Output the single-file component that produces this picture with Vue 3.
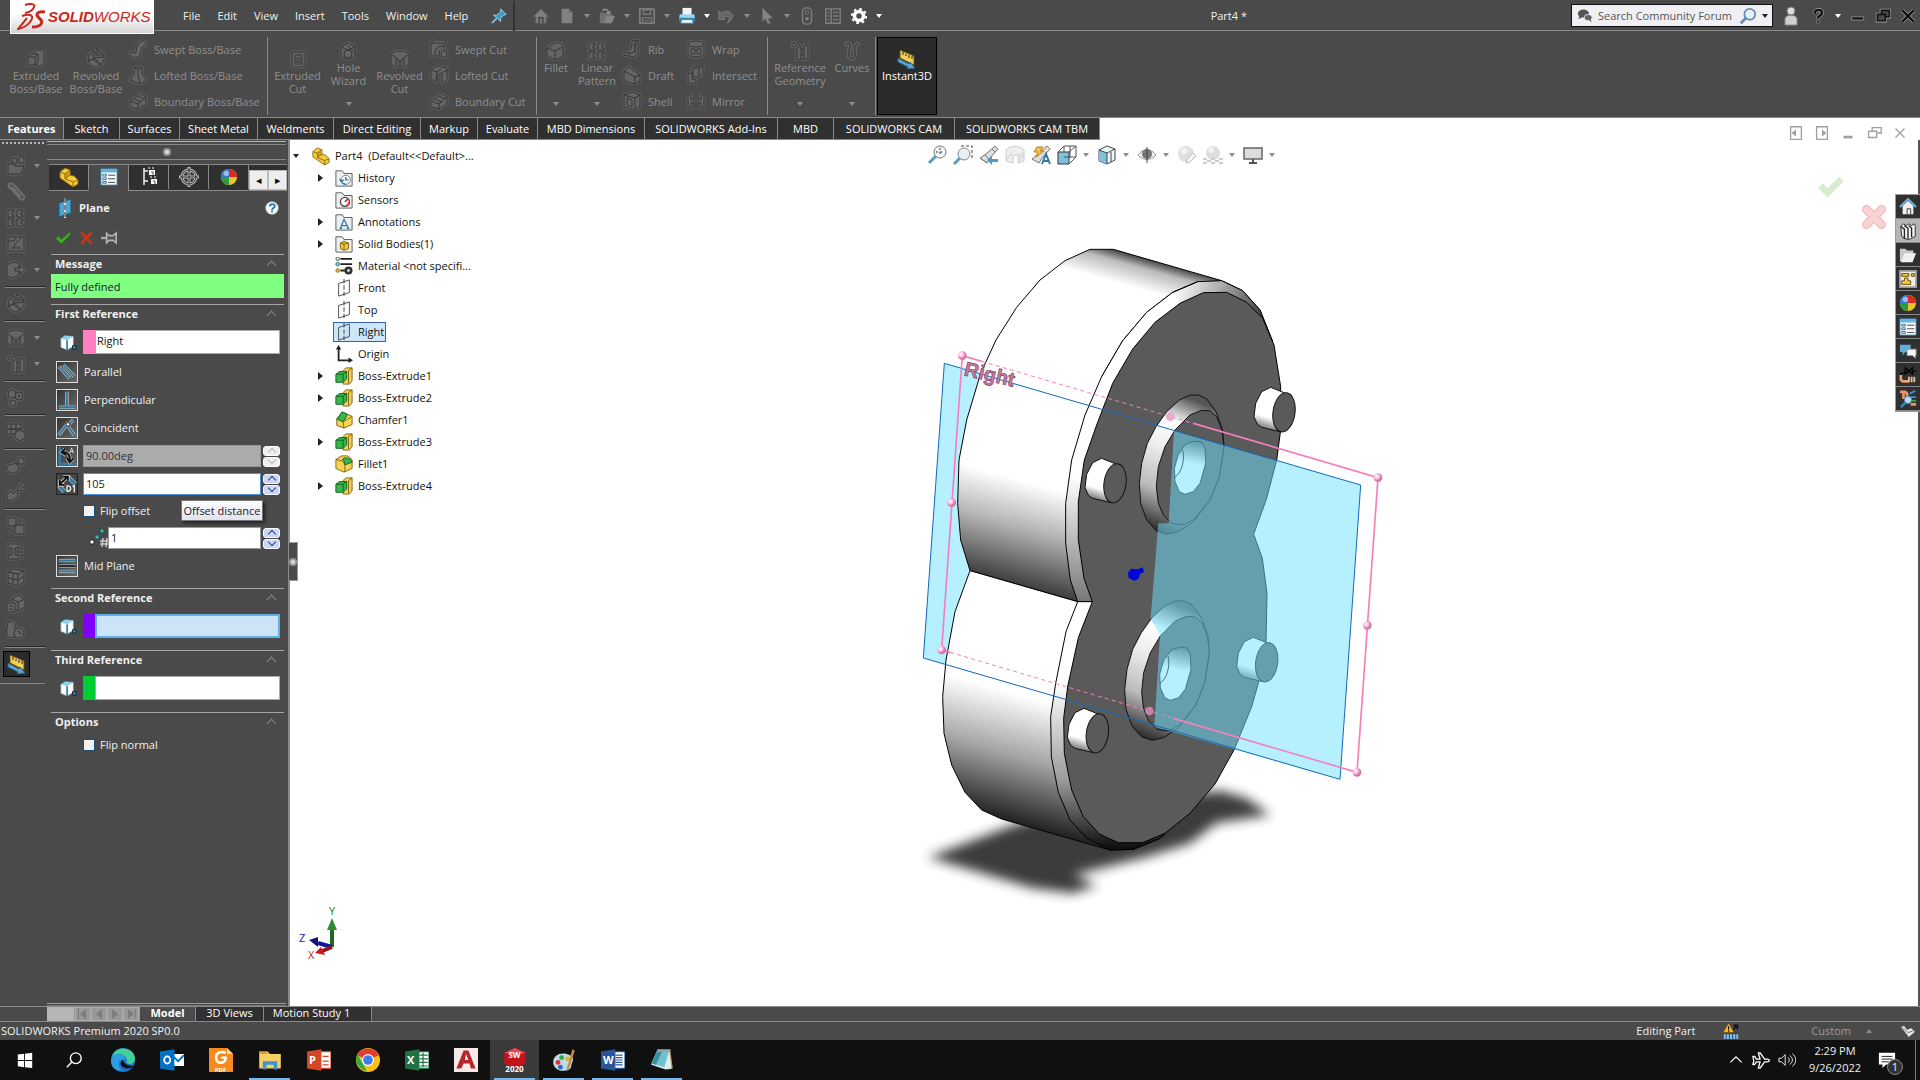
<script setup>
import { h, ref } from 'vue'

/* Disabled command glyphs share one dark-on-grey palette */
const dim = (body) => `<g fill="#646464" stroke="#353535" stroke-width="1" stroke-linejoin="round">${body}</g>`
const halo = (body) => `<g fill="none" stroke="#606060" stroke-width="3" stroke-linejoin="round">${body}</g>` + dim(body)

const icons = {
  extrude: halo('<path d="M8 3l3-2h7v13l-3 3h-4z"/><path d="M2 8l3-3h7v8l-3 3H2z"/><path d="M2 8h7v8M9 8l3-3" />'),
  revolve: halo('<path d="M10 1a8 8 0 1 1-6 3l5 5 8-1C17 4 14 1 10 1z"/><path d="M3 12l5-3 7 6-4 3c-4 0-7-2-8-6z"/><path d="M2 13l5-3 8 7"/>'),
  sweep: halo('<path d="M11 5c0-3 6-5 7-1 1 3-3 3-4 4-2 2 0 9-5 10-5 2-8-3-6-5 2-1 2 2 4 1 3-2 0-7 4-9z"/>'),
  loft: halo('<path d="M6 3l4-2 4 2v6l4 6-6 4-10-4 4-6z"/><path d="M6 3l4 1 4-1M10 4v5l2 10"/>'),
  boundary: halo('<path d="M2 10l5-4c2 2 4-4 6-3l5 3v7l-8 5-8-2z"/><path d="M2 10l8 3 8-7M10 13v5M6 8l7 3M10 5l6 3"/>'),
  cut: halo('<path d="M4 3h13v13l-3 2H4z"/><path d="M7 6h7v9H7z"/><path d="M9 9h3v4H9z"/>'),
  hole: halo('<path d="M2 6l7-4 7 4v9l-7 4-7-4z"/><path d="M2 6l7 3 7-3"/><circle cx="9" cy="13" r="4"/><path d="M8 4l9 9 M14 1l1 3M18 6l-3-1"/>'),
  revcut: halo('<path d="M1 5c4-4 14-4 18 0v10l-5 3V9l-4 3-4-3v9l-5-3z"/><path d="M1 5l5 4M19 5l-5 4M10 12v5"/>'),
  sweepcut: halo('<path d="M2 3l4-2h12l-3 4v3c-4 0-5 4-5 9H2z"/><path d="M6 16c0-7 3-9 9-9M2 4h13"/><path d="M12 18c0-4 1-6 5-7l1 7z"/>'),
  loftcut: halo('<path d="M2 5l6-4 10 2v12l-5 3V8l-3 1-3 8-5-3z"/><path d="M2 5l6 2 4-3M8 7l-1 10M13 8l5-3"/>'),
  fillet: halo('<path d="M1 7l8-5c5-1 8 1 8 5v8l-8 4-8-4z"/><path d="M1 7l8 3 8-4M9 10v9"/>'),
  pattern: halo('<path d="M2 2h6v2H6v3h2v2H2zM11 2h6v2h-2v3h2v2h-6zM2 11h6v2H6v3h2v2H2zM11 11h6v2h-2v3h2v2h-6z"/>'),
  rib: halo('<path d="M10 2l6-1v13l-4 4-10-2v-3l4 1c3-2 4-6 4-12z"/><path d="M16 1l-3 3v9l-7 2M13 4v9"/>'),
  draft: halo('<path d="M2 6l5-4 11 8v6l-5 3-11-3z"/><path d="M2 6l11 6v7M13 12l5-2"/>'),
  shell: halo('<path d="M2 4l8-3 8 3v11l-5 4-11-3z"/><path d="M2 4l11 3v12M13 7l5-3M5 7l5 2v7l-5-2z"/>'),
  wrap: halo('<path d="M2 5v10c0 4 16 4 16 0V5c0-4-16-4-16 0z"/><path d="M2 5c0 4 16 4 16 0"/><path d="M5 10h4v5H5zM11 10h4v5h-4z"/>'),
  intersect: halo('<path d="M7 3l3-2h7v8l-4 3H7z"/><path d="M2 8h4v6l4 1v3l-5 1-3-3z"/><path d="M7 3h6v8M13 3l4-2"/>'),
  mirror: halo('<path d="M2 3h3v5h3V3M8 17v-5H5v5H2V3M18 3h-3v5h-3V3M12 17v-5h3v5h3V3"/><path d="M10 1v18"/>'),
  refgeo: halo('<circle cx="4" cy="4" r="2"/><path d="M7 7l4-2v13l-4 1zM14 5l4-1v13l-4 2z"/><path d="M12 2v17" stroke-dasharray="3 2"/>'),
  curves: '<g fill="none" stroke-linecap="round"><path d="M4 3c6-2 4 3 3 7-3 11 8 9 6 1-1-4-1-7 3-8" stroke="#6a6a6a" stroke-width="4"/><path d="M4 3c6-2 4 3 3 7-3 11 8 9 6 1-1-4-1-7 3-8" stroke="#454545" stroke-width="2"/></g>',
  instant: '<path d="M3 1l14 6v9L3 9z" fill="#f4cf58" stroke="#6b5212"/><path d="M6 3v3M9 5v2M12 6v3M15 7v3" stroke="#222"/><path d="M1 9l11 6 1-2 5 6-8 1 1-2L1 13z" fill="#5fa4cc" stroke="#27668c"/>',
  clip: '<g fill="none" stroke="#6e6e6e" stroke-width="2"><path d="M3 4l11 13c3 2 5-1 4-3L8 3C5 0 1 2 3 5z M6 5l9 10"/></g>',
  sketchbox: halo('<path d="M2 3h16v14H2z"/><path d="M2 7h6l2-4M8 14l1-4 7-7M5 14h10"/>'),
  convert: halo('<path d="M1 5l5-3 7 1v12l-6 3-6-2z"/><path d="M9 8h5V5l5 5-5 4v-3H9z"/>'),
  gears: halo('<circle cx="6" cy="6" r="4"/><circle cx="13" cy="8" r="4"/><circle cx="7" cy="15" r="3"/><circle cx="13" cy="8" r="1"/>'),
  sheet: halo('<path d="M1 2h14v5H1zM1 7h14v5H1zM5 2v10M10 2v10"/><path d="M9 11l5-3 5 3v5l-5 3-5-3z"/>'),
  assem: halo('<path d="M1 11c3-5 5 0 7-4l4 2c2 5-3 9-7 8-3-1-5-3-4-6z"/><path d="M12 2h6v6h-6zM9 8l3-2"/>'),
  assem2: halo('<path d="M1 13l4-4 2 3 4-4 1 5-5 5-5 1z"/><path d="M12 7l2-5 4 4 1-4M11 9l6-1"/>'),
  joint: halo('<path d="M2 2h8v8H2zM9 9h9v9H9z"/><path d="M14 2v3M18 4l-3 2M4 13l3 2M2 16h4"/>'),
  beam: halo('<path d="M2 2h11v4H9v7h4v4H2v-4h4V6H2z"/><path d="M16 2v6l-2-2M16 18v-6l2 2M14 10h5"/>'),
  blocks: halo('<path d="M2 4l6-3 10 2v11l-6 4-10-3z"/><path d="M2 4l10 2v12M12 6l6-3M7 5v11M2 10l10 2 6-4"/>'),
  doccube: halo('<path d="M6 5l6-4 7 4v8l-7 4-6-4z"/><path d="M1 9h8v9H1zM3 12h4M3 15h4M12 8v9M6 5l6 3 7-3"/>'),
  clock: halo('<path d="M2 2c5-2 8 1 7 5v10c-8 2-9-2-8-8z"/><circle cx="13" cy="13" r="5"/><path d="M13 10v3l3 1"/>'),
  openasm: halo('<path d="M2 8h5l2 2h9l-3 8H2z"/><path d="M6 2h5v5H6zM13 1h5v6h-5z"/>'),
  home: '<path d="M2 10l8-8 8 8v1h-2v7H4v-7H2z" fill="#7d7d7d" stroke="#5a5a5a"/><path d="M7 18v-7h6v7z" fill="#4a4a4a"/><path d="M9 18v-5h2v5z" fill="#7d7d7d"/>',
  newdoc: '<path d="M4 2h8l4 4v12H4z" fill="#818181"/><path d="M12 2v4h4" fill="#666"/>',
  open: '<path d="M2 6h5l2 2h3l5 1-3 9H2z" fill="#717171"/><path d="M6 18l3-8h10l-4 8z" fill="#858585"/><path d="M5 4c4-3 7 0 7 3M14 5l-2 3-3-2" fill="none" stroke="#8a8a8a" stroke-width="2"/>',
  save: '<path d="M2 2h15l1 1v15H2z" fill="none" stroke="#7b7b7b" stroke-width="2"/><path d="M6 3h8v5H6zM5 12h10v6H5z" fill="none" stroke="#7b7b7b" stroke-width="1.500"/><path d="M7 15h6" stroke="#7b7b7b"/>',
  print: '<path d="M5 1h10v8H5z" fill="#f4f4f4"/><path d="M2 8h16l1 5H1z" fill="#9fd4ef"/><path d="M1 12h18v4H1z" fill="#2e86b5"/><path d="M4 14h12l1 4H3z" fill="#fff" stroke="#2e86b5"/>',
  undo: '<path d="M4 7c5-5 13-1 12 4-1 4-4 6-6 7 4-5 3-9-4-7l2 3H1V4z" fill="#666" stroke="#7e7e7e"/>',
  cursor: '<path d="M5 1l11 11-5 1 3 5-3 1-3-6-3 3z" fill="#858585" stroke="#666"/>',
  rebuild: '<rect x="5" y="1" width="10" height="18" rx="4" fill="#4b4b4b" stroke="#7f7f7f" stroke-width="1.500"/><circle cx="10" cy="6" r="2" fill="none" stroke="#7f7f7f"/><circle cx="10" cy="13" r="2" fill="#7f7f7f"/>',
  list: '<g fill="none" stroke="#808080" stroke-width="1.500"><path d="M2 2h16v16H2zM8 2v16M4 6h2M4 10h2M4 14h2M10 6h6M10 10h6M10 14h6"/></g>',
  gear: '<circle cx="10" cy="10" r="5" fill="none" stroke="#fff" stroke-width="4"/><circle cx="10" cy="10" r="8" fill="none" stroke="#fff" stroke-width="2" stroke-dasharray="3 3.280"/>',
  pushpin: '<path d="M12 1l7 7-3 1-4 4v4l-4-4-6 6-1-1 6-6-4-3h4l5-4z" fill="#3f9bc4" stroke="#a9d9ec"/>',
  chat: '<ellipse cx="8" cy="7" rx="7" ry="5" fill="#555"/><path d="M3 10l-1 4 5-3z" fill="#555"/><ellipse cx="14" cy="12" rx="5" ry="4" fill="#666" stroke="#fff"/><path d="M15 15l3 3-1-5z" fill="#666"/>',
  magnify: '<circle cx="12" cy="8" r="6" fill="#e6f1fb" stroke="#6b8fb4" stroke-width="2"/><path d="M8 12l-6 6" stroke="#5d8cb8" stroke-width="3"/>',
  person: '<path d="M4 19v-6c0-5 12-5 12 0v6z" fill="#cfcfcf" stroke="#888"/><circle cx="10" cy="5" r="4" fill="#dcdcdc" stroke="#777"/>',
  ques: '<path d="M6 7c0-6 9-6 9-1 0 4-5 3-5 7" fill="none" stroke="#999" stroke-width="5"/><circle cx="10" cy="17" r="2" fill="#111" stroke="#999"/><path d="M6 7c0-6 9-6 9-1 0 4-5 3-5 7" fill="none" stroke="#111" stroke-width="3"/>',
  wmin: '<path d="M2 11h15v4H2z" fill="#161616" stroke="#999"/>',
  wres: '<path d="M8 3h10v8H8zM3 8h10v8H3z" fill="#4a4a4a" stroke="#999" stroke-width="4"/><path d="M8 3h10v8H8z" fill="#4a4a4a" stroke="#111" stroke-width="2"/><path d="M3 8h10v8H3z" fill="#4a4a4a" stroke="#111" stroke-width="2"/>',
  wclose: '<path d="M3 3l14 14M17 3L3 17" stroke="#999" stroke-width="5"/><path d="M3 3l14 14M17 3L3 17" stroke="#111" stroke-width="3"/>',
  dleft: '<path d="M4 3h12v14H4z" fill="none" stroke="#a0a0a0" stroke-width="1.500"/><path d="M10 6v8l-5-4z" fill="#a0a0a0"/>',
  dright: '<path d="M4 3h12v14H4z" fill="none" stroke="#a0a0a0" stroke-width="1.500"/><path d="M10 6v8l5-4z" fill="#a0a0a0"/>',
  dmin: '<path d="M5 13h10v3H5z" fill="#a0a0a0"/>',
  dres: '<path d="M8 8V4h10v6h-4M4 8h9v7H4z" fill="none" stroke="#a0a0a0" stroke-width="1.500"/>',
  dclose: '<path d="M5 5l10 10M15 5L5 15" stroke="#a0a0a0" stroke-width="1.500"/>',
  okbig: '<path d="M2 13l4-4 4 4L20 3l4 4-14 14z" fill="#d7ecd0"/>',
  nobig: '<path d="M5 5l14 14M19 5L5 19" stroke="#f2b5b5" stroke-width="8" stroke-linecap="round"/><path d="M5 5l14 14M19 5L5 19" stroke="#f8d3d3" stroke-width="6" stroke-linecap="round"/>',
  part: '<path d="M1 5l5-4 5 2v5l4 1 4 4v4l-5 3L1 11z" fill="#f5cb3c" stroke="#8a6a10"/><path d="M6 7l5-4 0 5-5 4z" fill="#d39a1c"/><path d="M1 5l5 2 5-4M6 7v5M6 12l8 3 5-2M14 15v5M6 12l5-4" fill="none" stroke="#8a6a10"/>',
  propman: '<path d="M1 1h18v18H1z" fill="#fff" stroke="#2d77a0"/><path d="M1 1h18v4H1z" fill="#68b3dc"/><path d="M3 7h4v2H3zM3 11h4v2H3zM3 15h4v2H3z" fill="none" stroke="#1f6a96"/><path d="M9 8h8M9 12h8M9 16h8" stroke="#333"/>',
  config: '<path d="M5 1v17M5 4h4M5 14h4" stroke="#eee" stroke-width="1.500" fill="none"/><path d="M10 3h6v5h-6zM12 12h6v5h-6z" fill="#fff"/><path d="M9 1h2M13 1h2M11 10h2M15 10h2" stroke="#fff"/><path d="M12 5h2v3M14 14h2v3" stroke="#555" fill="none"/>',
  target: '<circle cx="10" cy="10" r="7" fill="none" stroke="#bbb" stroke-width="3"/><path d="M10 0v20M0 10h20" stroke="#bbb" stroke-width="3"/><circle cx="10" cy="10" r="7" fill="none" stroke="#333"/><path d="M10 1v18M1 10h18" stroke="#333"/>',
  ball: '<circle cx="10" cy="10" r="9" fill="#e9c52d"/><path d="M10 10V1a9 9 0 0 0-9 9z" fill="#3575e0"/><path d="M10 10h9a9 9 0 0 0-9-9z" fill="#d92b20"/><path d="M10 10H1a9 9 0 0 0 9 9z" fill="#2a9c3b"/><circle cx="7" cy="6" r="3" fill="#fff" opacity=".5"/>',
  planei: '<path d="M4 5l12-4v14L4 19z" fill="#4fa3d1" stroke="#1f5876"/><path d="M10 0v20" stroke="#ddd" stroke-width="2"/><path d="M10 0v20" stroke="#222" stroke-dasharray="5 2"/>',
  ok: '<path d="M1 11l3-3 4 4 10-9 2 2L8 17z" fill="#3fae29" stroke="#2c7d1b"/>',
  no: '<path d="M4 3l13 14M17 3L4 17" stroke="#d6340f" stroke-width="3"/>',
  pinh: '<path d="M0 10h7" stroke="#aaa" stroke-width="3"/><path d="M7 4l3 3h5l4-3v12l-4-3h-5l-3 3z" fill="#555" stroke="#b5b5b5" stroke-width="2"/>',
  help: '<circle cx="10" cy="10" r="9" fill="#f6fbfe" stroke="#bbb"/><path d="M7 8c0-5 7-4 7-1 0 3-4 3-4 6" fill="none" stroke="#1d7cab" stroke-width="2.500"/><circle cx="10" cy="15" r="1.500" fill="#1d7cab"/>',
  face: '<path d="M2 6l5-3 9 1v11l-7 4-7-3z" fill="#fff" stroke="#888"/><path d="M2 6l5-3 9 1-7 4z" fill="#8fd0ee"/><path d="M9 8v11" stroke="#2d88b8" stroke-width="2"/><path d="M15 14h4v4h-4z" fill="#2d88b8" stroke="#123"/>',
  parallel: '<path d="M2 5l12 13M7 3l12 13" stroke="#aaa" stroke-width="4"/><path d="M2 5l12 13M7 3l12 13" stroke="#2f7ba6" stroke-width="2"/>',
  perp: '<path d="M11 2v16M2 19h18" stroke="#aaa" stroke-width="4"/><path d="M11 2v16M2 19h18" stroke="#2f7ba6" stroke-width="2"/>',
  coin: '<path d="M2 19l9-12 8 12M12 8l6-6" fill="none" stroke="#aaa" stroke-width="4"/><path d="M2 19l9-12 8 12M12 8l6-6" fill="none" stroke="#2f7ba6" stroke-width="2"/><circle cx="12" cy="7" r="2" fill="#fff" stroke="#222"/>',
  angle: '<path d="M3 1v19h17" fill="none" stroke="#2f7ba6" stroke-width="3"/><path d="M6 7c5-1 9 3 8 9M9 3L5 7l5 3M11 13l3 5 4-4" fill="none" stroke="#aaa" stroke-width="4"/><path d="M6 7c5-1 9 3 8 9M9 3L5 7l5 3M11 13l3 5 4-4" fill="none" stroke="#111" stroke-width="2"/><path d="M14 8l2-6 2 6M15 6h3" fill="none" stroke="#ddd"/>',
  dist: '<path d="M2 13l6 6M12 3l8 8" stroke="#aaa" stroke-width="5"/><path d="M2 13l6 6M12 3l8 8" stroke="#2f7ba6" stroke-width="3"/><path d="M3 11l9-8M3 6v6h5M7 3h5v4" stroke="#ccc" stroke-width="4" fill="none"/><path d="M3 11l9-8M3 6v6h5M7 3h5v4" stroke="#111" stroke-width="2" fill="none"/><path d="M11 13h1c4 0 4 6 0 6h-1zM17 14l2-1v7" fill="none" stroke="#eee" stroke-width="1.500"/>',
  mid: '<path d="M2 5h18M2 11h18M2 17h18" stroke="#aaa" stroke-width="4"/><path d="M2 5h18M2 17h18" stroke="#2f7ba6" stroke-width="2"/><path d="M2 11h18" stroke="#222" stroke-width="2"/>',
  count: '<path d="M0 12h4v4H0z" fill="#fff" stroke="#222"/><path d="M5 7h4v4H5zM10 1h4v4h-4z" fill="#54a9d4" stroke="#153"/><path d="M13 10l-1 9M17 10l-1 9M10 13h9M10 16h9" stroke="#ccc" stroke-width="1.500"/>',
  fhist: '<path d="M1 2h7l2 3h9v14H1z" fill="#eee" stroke="#555"/><circle cx="12" cy="12" r="5" fill="#fff" stroke="#777"/><path d="M7 12a5 5 0 0 0 5 5M12 9v3h3M5 11l2 3 3-2" stroke="#1d7cab" fill="none" stroke-width="1.500"/>',
  fsens: '<path d="M1 2h7l2 3h9v14H1z" fill="#eee" stroke="#555"/><circle cx="11" cy="12" r="5" fill="#fff" stroke="#444" stroke-width="1.500"/><path d="M11 12l3-3" stroke="#c33" stroke-width="2"/><path d="M13 16a5 5 0 0 0 3-4" stroke="#e33" stroke-width="2" fill="none"/>',
  fann: '<path d="M1 2h7l2 3h9v14H1z" fill="#eee" stroke="#555"/><path d="M6 17l4-10 5 10M8 14h5M5 17h3M13 17h3" stroke="#2d83b3" stroke-width="1.500" fill="none"/>',
  fbody: '<path d="M1 2h7l2 3h9v14H1z" fill="#eee" stroke="#555"/><path d="M6 9l4-2 5 2v6l-5 2-4-2z" fill="#f3c83b" stroke="#795b0b"/><path d="M6 9l4 1 5-1M10 10v6" stroke="#795b0b" fill="none"/>',
  mat: '<path d="M6 2h13M6 8h13M6 15h6" stroke="#222" stroke-width="2"/><circle cx="3" cy="2" r="2" fill="#ddd" stroke="#555"/><circle cx="3" cy="8" r="2" fill="#7ec4e8" stroke="#276"/><circle cx="3" cy="15" r="2" fill="#f0c32e" stroke="#861"/><circle cx="15" cy="15" r="3" fill="none" stroke="#333" stroke-width="3"/>',
  tplane: '<path d="M4 5l12-4v14L4 19z" fill="none" stroke="#444"/><path d="M10 0v20" stroke="#333" stroke-dasharray="5 2"/>',
  origin: '<path d="M4 3v14h14" fill="none" stroke="#222" stroke-width="2"/><path d="M1 5l3-5 3 5zM15 14l5 3-5 3z" fill="#222"/>',
  bossx: '<path d="M9 4l3-3h7v14l-3 4H9z" fill="#f3cf55" stroke="#7a5d12"/><path d="M15 4l4-3M15 4v14" stroke="#7a5d12"/><path d="M1 8l4-3h8v8l-4 4H1z" fill="#35b84b" stroke="#0f5a1d"/><path d="M1 8h8v8M9 8l4-3" fill="none" stroke="#0f5a1d"/>',
  chamf: '<path d="M2 9l6-8 11 5v9l-9 4-8-3z" fill="#f5d451" stroke="#7a5d12"/><path d="M2 9l6-8 6 3-5 8z" fill="#35b84b" stroke="#0f5a1d"/><path d="M9 12l1 7M9 12l10-6" stroke="#7a5d12" fill="none"/>',
  fill: '<path d="M1 5l6-4 7 0 5 4v10l-9 4-9-4z" fill="#f5d451" stroke="#7a5d12"/><path d="M8 5c2-3 10-2 11 3l-8 3c0-3-1-5-3-6z" fill="#35b84b" stroke="#0f5a1d"/><path d="M1 5l8 2 2 4v8" fill="none" stroke="#7a5d12"/>',
  zfit: '<circle cx="13" cy="7" r="6" fill="#f2f6f8" stroke="#777"/><path d="M13 3v8M9 7h8" stroke="#333" stroke-dasharray="2 2"/><path d="M9 11l-7 7" stroke="#5b9fc0" stroke-width="3"/>',
  zarea: '<path d="M8 1h11v13" fill="none" stroke="#444" stroke-dasharray="3 2"/><circle cx="11" cy="9" r="6" fill="#e8f0f4" stroke="#888"/><path d="M7 13l-6 6" stroke="#5b9fc0" stroke-width="3"/>',
  prev: '<path d="M1 13l6-4 9-8 3 3-8 9-3 5z" fill="#ddd" stroke="#777"/><path d="M6 10l4 4M13 4l3 3M1 13l7 5" stroke="#777"/><path d="M8 15l5-4v3h6v3h-6v3z" fill="#4f9dc2"/>',
  section: '<path d="M1 5c4-5 14-5 18 0v11l-6 2V9c-2 2-4 2-5 1v8l-7-2z" fill="#eee" stroke="#ccc"/><path d="M2 14l5-6M14 16l5-7M14 12l4-5" stroke="#ccc"/>',
  dyn: '<path d="M1 14l6-5 9-8 3 3-8 9-3 5z" fill="#ddd" stroke="#777"/><path d="M6 2h6l-3 4h4l-8 6 2-5H3z" fill="#f4c34c" stroke="#c47a1c"/><path d="M11 19l4-10 4 10M13 16h4" stroke="#2f7ba6" stroke-width="2" fill="none"/>',
  orient: '<path d="M1 7h11v12H1z" fill="#7fc0dd" stroke="#333"/><path d="M1 7l6-6h12v11l-7 7M12 7l7-6M7 1v6M13 1v12M7 12h12" fill="none" stroke="#555"/>',
  style: '<path d="M2 5l8-4 8 3v11l-8 4-8-3z" fill="#eef6fa" stroke="#444"/><path d="M2 5l8 3v11l-8-3z" fill="#7fc0dd"/><path d="M2 5l8 3 8-4M10 8v11M14 7v10" fill="none" stroke="#444"/>',
  eye: '<path d="M1 10c5-7 13-7 18 0-5 6-13 6-18 0z" fill="#eee" stroke="#999"/><circle cx="10" cy="9" r="5" fill="#777"/><path d="M10 2v16" stroke="#444"/>',
  app: '<circle cx="9" cy="9" r="8" fill="#e0e0e0"/><circle cx="7" cy="6" r="3" fill="#f4f4f4"/><path d="M9 18l1-4 6-6 3 3-6 6z" fill="#f4f4f4" stroke="#bbb"/>',
  scene: '<circle cx="10" cy="8" r="7" fill="#ddd"/><circle cx="8" cy="5" r="3" fill="#f2f2f2"/><path d="M0 13h4v2H0zM4 15h4v2H4zM8 13h4v2H8zM12 15h4v2h-4zM16 13h4v2h-4zM0 17h4v2H0zM8 17h4v2H8zM16 17h4v2h-4z" fill="#ccc"/>',
  monitor: '<path d="M1 3h18v11H1z" fill="#ddd" stroke="#666" stroke-width="1.500"/><path d="M10 14v4M6 18h8" stroke="#555" stroke-width="2"/>',
  tphome: '<path d="M4 9v9h12V9l-6-6z" fill="#f2f2f2"/><path d="M1 10l9-9 9 9" fill="none" stroke="#6fb8de" stroke-width="2"/><path d="M9 18v-6h4v6" stroke="#333" fill="none"/>',
  books: '<path d="M2 5l3-3 3 2 3-2 3 2 3-2 1 2v12l-8 4-7-4z" fill="#f4f4f4" stroke="#222"/><path d="M2 5l4 3v11M6 4l4 3v12M11 4l3 3v10" stroke="#222" fill="none" stroke-width="1.500"/>',
  folder: '<path d="M1 3h6l2 2h7v4L6 17H1z" fill="#c9c9c9"/><path d="M6 8h13l-4 10H2z" fill="#f0f0f0"/>',
  palette: '<path d="M1 1h18v18H1z" fill="#eee" stroke="#999" stroke-width="2"/><path d="M3 4h8v3H3zM14 4h3v3h-3zM6 9h4v3h3v4H3v-4h3z" fill="#f5cb3c" stroke="#5b4508"/>',
  forum: '<path d="M1 3h12v8H7l-3 4v-4H1z" fill="#5db0da"/><path d="M9 8h10v7h-1v3l-3-3H9z" fill="#f4f4f4" stroke="#999"/>',
  pipe: '<path d="M2 8h5M7 2l8 7V2L7 9zM15 6h4M2 8v6" stroke="#050505" stroke-width="1.500" fill="none"/><path d="M2 10v5l2 2h7" stroke="#e9a070" stroke-width="3" fill="none"/><path d="M11 12v6M14 12v6M17 12v6" stroke="#f0bd95" stroke-width="2"/>',
  route: '<path d="M1 2h6l2 2v5M5 2v8M13 16h6" stroke="#e9936a" stroke-width="3" fill="none"/><path d="M12 4l6-3M12 8h7" stroke="#3c8fd0" stroke-width="2"/><path d="M14 12h5" stroke="#3a3" stroke-width="2"/><circle cx="10" cy="11" r="4" fill="#b8dcf2" stroke="#4c88b8"/><path d="M7 14l-5 5" stroke="#3e7fb6" stroke-width="3"/>',
  win: '<path d="M2 4l7-1v7H2zM10 3l8-1v8h-8zM2 11h7v7l-7-1zM10 11h8v8l-8-1z" fill="#fff"/>',
  search: '<circle cx="12" cy="8" r="6" fill="none" stroke="#fff" stroke-width="1.500"/><path d="M8 12l-6 6" stroke="#fff" stroke-width="1.500"/>',
  edge: '<circle cx="10" cy="10" r="10" fill="#1b75d0"/><path d="M1 7C4-3 20-1 20 9c0 5-6 5-7 3 2-6-7-9-12-5z" fill="#43cf95"/><path d="M1 7c6-4 12-1 11 3-5-3-8 4-3 9C0 19-1 12 1 7z" fill="#2d9ee0"/><path d="M10 10c-3 1-3 6 3 7 3 0 5-1 6-2-4 0-8-1-9-5z" fill="#111"/>',
  outlook: '<path d="M10 5h10v10H10z" fill="#fff"/><path d="M10 6l5 5 5-5" fill="none" stroke="#0072c6" stroke-width="1.500"/><path d="M0 3l12-2v18L0 17z" fill="#0072c6"/><ellipse cx="6" cy="10" rx="2.500" ry="3" fill="none" stroke="#fff" stroke-width="1.500"/>',
  foxit: '<path d="M0 0h15l5 5v15H0z" fill="#f58a1f"/><path d="M15 0v5h5z" fill="#ffd6a5"/><path d="M14 4c-5-2-9 1-8 5 1 5 8 4 8-1h-4" fill="none" stroke="#fff" stroke-width="2"/>',
  explorer: '<path d="M1 3h7l2 2h9v12H1z" fill="#f6cf62"/><path d="M1 3h7v2H1z" fill="#d9a02e"/><path d="M4 18v-7h12v7h-3v-4H7v4z" fill="#3d95d6"/>',
  ppt: '<path d="M10 3h10v14H10z" fill="#fff" stroke="#d24726"/><path d="M13 7h5M13 11h5M13 14h5" stroke="#d24726"/><path d="M0 3l12-2v18L0 17z" fill="#d24726"/>',
  chrome: '<circle cx="10" cy="10" r="10" fill="#fbc116"/><path d="M10 10L1 6A10 10 0 0 1 19 6z" fill="#e33b2e"/><path d="M1 5l8 14A10 10 0 0 1 1 5z" fill="#2da94f"/><circle cx="10" cy="10" r="5" fill="#fff"/><circle cx="10" cy="10" r="4" fill="#3b7ded"/>',
  excel: '<path d="M10 3h10v14H10z" fill="#fff" stroke="#1f7244"/><path d="M12 6h7M12 9h7M12 12h7M12 15h7M15 4v12" stroke="#1f7244"/><path d="M0 3l12-2v18L0 17z" fill="#1f7244"/>',
  acad: '<path d="M0 0h20v20H0z" fill="#f6e9e7"/><path d="M2 17L8 2h4l6 15h-4l-1-4H8l-2 4zM9 10h3l-2-5z" fill="#b3272d"/>',
  sw: '<path d="M1 4l9-4 9 4v9l-9 4-9-4z" fill="#c4141b"/><path d="M1 4l9-4 9 4-9 2z" fill="#e24a4f"/>',
  paint: '<path d="M1 12C1 5 9 3 15 6c5 3 1 6 1 9s-3 4-7 4-8-3-8-7z" fill="#bcdcec"/><circle cx="5" cy="12" r="2" fill="#d33"/><circle cx="8" cy="8" r="2" fill="#3a3"/><circle cx="13" cy="9" r="2" fill="#e9b223"/><circle cx="7" cy="16" r="2" fill="#36c"/><path d="M17 1l2 1-5 16h-2z" fill="#c98a45"/>',
  word: '<path d="M10 3h10v14H10z" fill="#fff" stroke="#2a5699"/><path d="M12 6h6M12 8h6M12 10h6M12 12h6M12 14h6" stroke="#2a5699"/><path d="M0 3l12-2v18L0 17z" fill="#2a5699"/>',
  note: '<path d="M7 2h10l2 15-4 1z" fill="#b88d62"/><path d="M6 2h10l2 15-5 1L1 14z" fill="#dfeaea"/><path d="M6 2h10l-4 14L1 13z" fill="#6cc3d1"/><path d="M6 3h4L5 14l-4-1z" fill="#3f8e9c"/><path d="M6 1h11v2H6z" fill="#8fa5a8"/>',
  caret: '<path d="M3 13l7-7 7 7" fill="none" stroke="#fff" stroke-width="1.500"/>',
  plane: '<path d="M1 6h2l2 3h4L7 2h2l5 7h3c3 0 3 3 0 3h-3l-5 7H7l2-7H5l-2 3H1l1-4z" fill="none" stroke="#fff" stroke-width="1.500" stroke-linejoin="round"/>',
  vol: '<path d="M1 8h3l4-4v12l-4-4H1z" fill="none" stroke="#fff"/><path d="M11 7c2 2 2 4 0 6M13 5c4 3 4 7 0 10M16 3c5 4 5 10 0 14" fill="none" stroke="#fff"/>',
  notif: '<path d="M1 2h18v13H9l-4 4v-4H1z" fill="#fff"/><path d="M4 6h12M4 9h12M4 12h8" stroke="#111"/>',
  warn: '<path d="M1 14h18v6H1z" fill="#7fc0e4"/><path d="M4 14v6M8 13v7M12 12v8M16 10v10" stroke="#226"/><path d="M11 11l6-8M13 3h5v5" stroke="#111" stroke-width="2" fill="none"/><path d="M0 12L7 0l7 12z" fill="#f6b820" stroke="#734a00"/><path d="M7 4v4M7 9v2" stroke="#111" stroke-width="1.500"/>',
  tag: '<path d="M1 5l4-2 4 5 5-2 5 5-8 7z" fill="#e8e8e8" stroke="#555"/><path d="M4 6l6 6 6-2" fill="none" stroke="#555"/>',
}

const Ico = (p) => h('svg', { width: p.s || 20, height: p.s || 20, viewBox: p.vb || '0 0 20 20', 'aria-hidden': 'true', innerHTML: icons[p.n] })
Ico.props = ['n', 's', 'vb']

const menus = ['File', 'Edit', 'View', 'Insert', 'Tools', 'Window', 'Help']
const quick = [
  { n: 'home' }, { n: 'newdoc', a: 1 }, { n: 'open', a: 1 }, { n: 'save', a: 1 }, { n: 'print', a: 1, on: 1 },
  { n: 'undo', a: 1 }, { n: 'cursor', a: 1 }, { n: 'rebuild' }, { n: 'list' }, { n: 'gear', a: 1, on: 1 },
]
const ribbon = [
  { cls: 'g1', big: [{ n: 'extrude', t: ['Extruded', 'Boss/Base'] }, { n: 'revolve', t: ['Revolved', 'Boss/Base'] }],
    cols: [[['sweep', 'Swept Boss/Base'], ['loft', 'Lofted Boss/Base'], ['boundary', 'Boundary Boss/Base']]] },
  { cls: 'g2', big: [{ n: 'cut', t: ['Extruded', 'Cut'] }, { n: 'hole', t: ['Hole', 'Wizard'], a: 1 }, { n: 'revcut', t: ['Revolved', 'Cut'] }],
    cols: [[['sweepcut', 'Swept Cut'], ['loftcut', 'Lofted Cut'], ['boundary', 'Boundary Cut']]] },
  { cls: 'g3', big: [{ n: 'fillet', t: ['Fillet'], a: 1 }, { n: 'pattern', t: ['Linear', 'Pattern'], a: 1 }],
    cols: [[['rib', 'Rib'], ['draft', 'Draft'], ['shell', 'Shell']], [['wrap', 'Wrap'], ['intersect', 'Intersect'], ['mirror', 'Mirror']]] },
  { cls: 'g4', big: [{ n: 'refgeo', t: ['Reference', 'Geometry'], a: 1 }, { n: 'curves', t: ['Curves'], a: 1 }], cols: [] },
]
const tabs = [
  ['Features', 64], ['Sketch', 56], ['Surfaces', 60], ['Sheet Metal', 78], ['Weldments', 76], ['Direct Editing', 87], ['Markup', 57],
  ['Evaluate', 60], ['MBD Dimensions', 107], ['SOLIDWORKS Add-Ins', 133], ['MBD', 56], ['SOLIDWORKS CAM', 121], ['SOLIDWORKS CAM TBM', 145],
]
const strip = [
  ['openasm', 1], ['clip'], ['pattern', 1], ['sketchbox'], ['convert', 1], '-', ['revolve'], '-', ['revcut', 1], ['refgeo', 1], '-', ['gears'], '-',
  ['sheet'], '-', ['assem'], ['assem2'], '-', ['joint'], ['beam'], ['blocks'], ['doccube'], ['clock'], '-',
]
const tree = [
  { n: 'fhist', t: 'History', a: 1 }, { n: 'fsens', t: 'Sensors' }, { n: 'fann', t: 'Annotations', a: 1 }, { n: 'fbody', t: 'Solid Bodies(1)', a: 1 },
  { n: 'mat', t: 'Material <not specifi...' }, { n: 'tplane', t: 'Front' }, { n: 'tplane', t: 'Top' }, { n: 'tplane', t: 'Right', sel: 1 },
  { n: 'origin', t: 'Origin' }, { n: 'bossx', t: 'Boss-Extrude1', a: 1 }, { n: 'bossx', t: 'Boss-Extrude2', a: 1 }, { n: 'chamf', t: 'Chamfer1' },
  { n: 'bossx', t: 'Boss-Extrude3', a: 1 }, { n: 'fill', t: 'Fillet1' }, { n: 'bossx', t: 'Boss-Extrude4', a: 1 },
]
const hud = [
  { n: 'zfit' }, { n: 'zarea' }, { n: 'prev' }, { n: 'section' }, { n: 'dyn' }, { n: 'orient', a: 1 }, { n: 'style', a: 1 },
  { n: 'eye', a: 1 }, { n: 'app' }, { n: 'scene', a: 1 }, { n: 'monitor', a: 1 },
]
const pane = ['tphome', 'books', 'folder', 'palette', 'ball', 'propman', 'forum', 'pipe', 'route']
const apps = [
  { n: 'win' }, { n: 'search' }, { n: 'edge' }, { n: 'outlook' }, { n: 'foxit' }, { n: 'explorer', run: 1 }, { n: 'ppt', l: 'P' }, { n: 'chrome' },
  { n: 'excel', l: 'X' }, { n: 'acad' }, { n: 'sw', run: 1, act: 1 }, { n: 'paint', run: 1 }, { n: 'word', run: 1, l: 'W' }, { n: 'note', run: 1 },
]

const angle = ref('90.00deg')
const offset = ref('105')
const planes = ref('1')
const first = ref('Right')
const second = ref('')
const third = ref('')
const flipOffset = ref(false)
const flipNormal = ref(false)

const pins = [[0, 0], [-507, 213], [-560, 963]]
const grips = [[187, 377], [155, 818], [125, 1260], [1434, 743], [1402, 1186], [1371, 1627]]
</script>

<template>
  <div class="app">
    <header class="titlebar">
      <div class="logo">
        <svg width="29" height="29" viewBox="0 0 29 29" fill="none" stroke="#c9281c" stroke-width="2" aria-hidden="true">
          <path d="M8 2c5-2 11-1 9 2-1 3-4 5-9 6" /><path d="M5 13c9-3 13 0 8 6-3 4-7 6-12 7l9-11" />
          <path d="M28 9c-8-1-10 2-6 6 5 4 3 9-7 9" stroke-width="3" />
        </svg>
        <span class="brand"><b>SOLID</b>WORKS</span>
      </div>
      <nav class="menus"><button v-for="m in menus" :key="m">{{ m }}</button></nav>
      <Ico n="pushpin" s="16" class="pin" />
      <div class="quick">
        <button v-for="q in quick" :key="q.n" :class="{ on: q.on }" :aria-label="q.n"><Ico :n="q.n" s="18" /><i v-if="q.a" class="dn"></i></button>
      </div>
      <span class="doc">Part4 *</span>
      <div class="search">
        <Ico n="chat" s="16" /><input type="text" placeholder="Search Community Forum" aria-label="Search Community Forum" /><Ico n="magnify" s="18" /><i class="dn"></i>
      </div>
      <div class="wbtns">
        <button aria-label="Account"><Ico n="person" /></button><button aria-label="Help"><Ico n="ques" s="16" /></button><i class="dn"></i>
        <button aria-label="Minimize"><Ico n="wmin" s="16" /></button><button aria-label="Restore"><Ico n="wres" s="16" /></button><button aria-label="Close"><Ico n="wclose" s="16" /></button>
      </div>
    </header>

    <section class="ribbon">
      <div v-for="g in ribbon" :key="g.cls" class="group" :class="g.cls">
        <button v-for="b in g.big" :key="b.n" class="big" :class="{ drop: b.a }">
          <Ico :n="b.n" /><span v-for="l in b.t" :key="l">{{ l }}</span><i v-if="b.a" class="dn"></i>
        </button>
        <div v-for="(c, i) in g.cols" :key="i" class="col">
          <button v-for="s in c" :key="s[1]"><Ico :n="s[0]" />{{ s[1] }}</button>
        </div>
      </div>
      <button class="instant"><Ico n="instant" /><span>Instant3D</span></button>
    </section>

    <div class="tabrow">
      <nav class="tabs">
        <button v-for="(t, i) in tabs" :key="t[0]" :class="{ cur: i === 0 }" :style="{ width: t[1] + 'px' }">{{ t[0] }}</button>
      </nav>
      <div class="docbtns">
        <button v-for="d in ['dleft', 'dright', 'dmin', 'dres', 'dclose']" :key="d" :aria-label="d"><Ico :n="d" s="18" /></button>
      </div>
    </div>

    <main class="work">
      <aside class="strip">
        <div class="dots"></div>
        <template v-for="(s, i) in strip" :key="i">
          <hr v-if="s === '-'" />
          <button v-else :aria-label="s[0]"><Ico :n="s[0]" /><i v-if="s[1]" class="dn"></i></button>
        </template>
        <button class="inst" aria-label="Instant3D"><Ico n="instant" /></button>
        <div class="end"></div>
      </aside>

      <aside class="panel">
        <div class="grab"><i class="knob"></i></div>
        <nav class="ptabs">
          <button aria-label="Features"><Ico n="part" /></button><button class="cur" aria-label="Properties"><Ico n="propman" s="18" /></button>
          <button aria-label="Configurations"><Ico n="config" /></button><button aria-label="Dimensions"><Ico n="target" /></button>
          <button aria-label="Display"><Ico n="ball" s="18" /></button>
          <span class="scroll"><button aria-label="Left">◂</button><button aria-label="Right">▸</button></span>
        </nav>
        <div class="phead"><Ico n="planei" /><b>Plane</b><Ico n="help" s="14" class="right" /></div>
        <div class="acts">
          <button aria-label="OK"><Ico n="ok" s="16" /></button><button aria-label="Cancel"><Ico n="no" s="16" /></button><button aria-label="Keep visible"><Ico n="pinh" s="16" /></button>
        </div>

        <section class="sec msg"><h2>Message<i class="chev"></i></h2><p>Fully defined</p></section>

        <section class="sec">
          <h2>First Reference<i class="chev"></i></h2>
          <div class="selrow"><Ico n="face" s="18" /><i class="swatch pink"></i><input v-model="first" type="text" aria-label="First reference" /></div>
          <div class="rows">
            <button class="rel"><span class="box"><Ico n="parallel" vb="0 0 22 22" /></span>Parallel</button>
            <button class="rel"><span class="box"><Ico n="perp" vb="0 0 22 22" /></span>Perpendicular</button>
            <button class="rel"><span class="box"><Ico n="coin" vb="0 0 22 22" /></span>Coincident</button>
            <div class="rel"><span class="box"><Ico n="angle" vb="0 0 22 22" /></span><input v-model="angle" class="num" type="text" disabled aria-label="Angle" /><span class="spin off"><button disabled aria-label="Up"></button><button disabled aria-label="Down"></button></span></div>
            <div class="rel"><span class="box down"><Ico n="dist" vb="0 0 22 22" /></span><input v-model="offset" class="num foc" type="text" aria-label="Offset distance" /><span class="spin"><button aria-label="Up"></button><button aria-label="Down"></button></span></div>
            <div class="chk"><label><input v-model="flipOffset" type="checkbox" />Flip offset</label><span class="tip">Offset distance</span></div>
            <div class="rel inset"><Ico n="count" /><input v-model="planes" class="num" type="text" aria-label="Number of planes" /><span class="spin"><button aria-label="Up"></button><button aria-label="Down"></button></span></div>
            <button class="rel"><span class="box"><Ico n="mid" vb="0 0 22 22" /></span>Mid Plane</button>
          </div>
        </section>
        <section class="sec">
          <h2>Second Reference<i class="chev"></i></h2>
          <div class="selrow active"><Ico n="face" s="18" /><i class="swatch violet"></i><input v-model="second" type="text" aria-label="Second reference" /></div>
        </section>
        <section class="sec">
          <h2>Third Reference<i class="chev"></i></h2>
          <div class="selrow"><Ico n="face" s="18" /><i class="swatch green"></i><input v-model="third" type="text" aria-label="Third reference" /></div>
        </section>
        <section class="sec">
          <h2>Options<i class="chev"></i></h2>
          <div class="chk"><label><input v-model="flipNormal" type="checkbox" />Flip normal</label></div>
        </section>
        <div class="foot"></div>
        <div class="handle"><i class="knob"></i></div>
      </aside>

      <section class="view">
        <ul class="tree">
          <li class="root"><i class="dn"></i><Ico n="part" s="18" />Part4&nbsp; (Default&lt;&lt;Default&gt;...</li>
          <li v-for="t in tree" :key="t.t"><i v-if="t.a" class="rt"></i><span :class="{ sel: t.sel }"><Ico :n="t.n" s="18" />{{ t.t }}</span></li>
        </ul>
        <div class="hud"><button v-for="b in hud" :key="b.n" :class="{ wide: b.a }" :aria-label="b.n"><Ico :n="b.n" /><i v-if="b.a" class="dn"></i></button></div>
        <button class="corner yes" aria-label="Accept"><Ico n="okbig" s="30" vb="0 0 26 24" /></button>
        <button class="corner nope" aria-label="Reject"><Ico n="nobig" s="26" vb="0 0 24 24" /></button>
        <nav class="pane"><button v-for="(p, i) in pane" :key="p" :class="{ cur: i === 1 }" :aria-label="p"><Ico :n="p" s="18" /></button></nav>

        <svg class="model" width="500" height="680" viewBox="0 0 1500 2040" role="img" aria-label="Part model">
          <defs>
            <filter id="soft" x="-20%" y="-20%" width="140%" height="140%"><feGaussianBlur stdDeviation="18" /></filter>
            <linearGradient id="up" gradientUnits="userSpaceOnUse" x1="640" y1="58" x2="359" y2="1063"><stop offset="0" stop-color="#444" /><stop offset=".03" stop-color="#bbb" /><stop offset=".09" stop-color="#fff" /><stop offset=".71" stop-color="#fff" /><stop offset=".84" stop-color="#b5b5b5" /><stop offset="1" stop-color="#404040" /></linearGradient>
            <linearGradient id="low" gradientUnits="userSpaceOnUse" x1="210" y1="1022" x2="24" y2="1687"><stop offset="0" stop-color="#fff" /><stop offset=".46" stop-color="#fff" /><stop offset=".72" stop-color="#a5a5a5" /><stop offset="1" stop-color="#222" /></linearGradient>
            <linearGradient id="ch1" gradientUnits="userSpaceOnUse" x1="1080" y1="260" x2="820" y2="180"><stop offset="0" stop-color="#444" /><stop offset=".5" stop-color="#aaa" /><stop offset="1" stop-color="#fff" /></linearGradient>
            <linearGradient id="ch2" gradientUnits="userSpaceOnUse" x1="0" y1="740" x2="0" y2="1115"><stop offset="0" stop-color="#fff" /><stop offset="1" stop-color="#777" /></linearGradient>
            <linearGradient id="ch3" gradientUnits="userSpaceOnUse" x1="0" y1="1360" x2="0" y2="1850"><stop offset="0" stop-color="#fff" /><stop offset=".6" stop-color="#999" /><stop offset="1" stop-color="#111" /></linearGradient>
            <linearGradient id="ring" gradientUnits="userSpaceOnUse" x1="930" y1="530" x2="770" y2="910"><stop offset="0" stop-color="#555" /><stop offset=".2" stop-color="#fff" /><stop offset=".4" stop-color="#eee" /><stop offset=".7" stop-color="#bbb" /><stop offset="1" stop-color="#222" /></linearGradient>
            <linearGradient id="pin" x1=".2" y1="0" x2="0" y2="1"><stop offset="0" stop-color="#fff" /><stop offset=".6" stop-color="#fff" /><stop offset="1" stop-color="#333" /></linearGradient>
            <linearGradient id="bore" gradientUnits="userSpaceOnUse" x1="885" y1="633" x2="870" y2="700"><stop offset="0" stop-color="#555" /><stop offset="1" stop-color="#fff" /></linearGradient>
            <radialGradient id="dot" cx=".35" cy=".35"><stop offset="0" stop-color="#fff" /><stop offset=".6" stop-color="#ffb5dd" /><stop offset="1" stop-color="#d676a8" /></radialGradient>
            <g id="boss" stroke="#111" stroke-width="3">
              <path d="M895 495L870 495 838 510 800 545 768 590 742 640 725 700 718 760 722 820 740 870 768 902 800 913 835 905 880 875 930 810 958 740 972 650 968 600 948 545 920 507z" fill="url(#ring)" />
              <path d="M930 543L905 541 870 555 825 600 795 650 775 710 769 770 775 820 790 855 815 880 850 885 880 870 930 810 958 740 972 650 966 600 950 560z" fill="#5a5a5a" />
              <path d="M885 633L905 636 915 655 917 700 900 760 880 785 855 793 838 785 825 755 823 715 835 672 858 642z" fill="url(#bore)" />
              <path d="M848 660c8 30-4 70-24 82" fill="none" />
            </g>
            <g id="stud" stroke="#111" stroke-width="3">
              <path d="M1152 488L1112 472 1085 485 1067 520 1062 560 1072 583 1085 592 1140 605z" fill="url(#pin)" />
              <ellipse cx="1152" cy="547" rx="33" ry="59" transform="rotate(8 1152 547)" fill="#5a5a5a" />
            </g>
          </defs>
          <g fill="#333" filter="url(#soft)" opacity=".95">
            <path d="M85 1882L340 1785 640 1700 880 1690 960 1682 1040 1705 1110 1755 950 1778 870 1840 740 1880 520 1935 590 1965 520 1990 400 1975z" />
          </g>
          <path d="M133 400L300 449 500 1000 300 1351 70 1284z" fill="#b6f0ff" />
          <path d="M640 58L570 58 495 92 420 150 350 232 288 330 242 430 200 570 177 690 173 820 182 930 210 1022 533 1115 577 1115 1000 400 1118 335 1080 240 1028 182 965 152z" fill="url(#up)" stroke="#000" stroke-width="3" />
          <path d="M210 1022L165 1145 138 1290 128 1400 132 1510 155 1605 195 1687 245 1740 305 1767 630 1860 700 1858 780 1825 795 1810 577 1115 533 1115z" fill="url(#low)" stroke="#000" stroke-width="3" />
          <path d="M965 152L893 155 818 187 740 247 668 332 605 440 698 400 1040 300 1118 335 1080 240 1028 182z" fill="url(#ch1)" stroke="#000" stroke-width="3" />
          <path d="M818 187L740 247 668 332 605 440 555 555 515 690 497 820 497 940 511 1050 533 1115 577 1115 700 800 840 220z" fill="url(#ch2)" />
          <path d="M893 155L818 187 740 247 668 332 605 440 555 555 515 690 497 820 497 940 511 1050 533 1115 577 1115" fill="none" stroke="#000" stroke-width="3" />
          <path d="M577 1115L533 1115 498 1205 467 1360 452 1460 454 1580 475 1687 510 1770 560 1825 630 1860 700 1858 780 1825 795 1810z" fill="url(#ch3)" stroke="#000" stroke-width="3" />
          <path d="M980 187L910 188 840 220 765 277 698 357 638 460 590 585 553 690 535 815 535 930 552 1045 577 1115 535 1223 503 1370 491 1465 493 1570 515 1680 550 1760 598 1812 655 1838 728 1838 795 1810 870 1750 945 1662 1003 1558 1055 1430 1075 1360 1098 1240 1101 1090 1087 985 1061 913 1100 805 1130 690 1142 600 1142 470 1122 345 1088 265 1040 217z" fill="#5a5a5a" stroke="#000" stroke-width="3" />
          <use href="#boss" /><use href="#boss" x="-44" y="618" />
          <use v-for="p in pins" :key="p[0]" href="#stud" :x="p[0]" :y="p[1]" />
          <use href="#stud" x="-52" y="750" />
          <path d="M822 602L1382 765 1320 1648 763 1490 780 1215 752 1165 775 880 806 880z" fill="#70e1ff" fill-opacity=".51" />
          <path d="M133 400L1382 765 1320 1648 70 1284z" fill="none" stroke="#1468bd" stroke-width="3" />
          <g stroke="#f57fbc" stroke-width="5" fill="none">
            <path d="M245 394L187 377 125 1260 150 1267M880 580L1434 743 1371 1627 820 1465" />
            <path d="M245 394L880 580M150 1267L820 1465" stroke-width="3" stroke-dasharray="12 10" />
          </g>
          <circle v-for="g in grips" :key="g[0]" :cx="g[0]" :cy="g[1]" r="13" fill="url(#dot)" />
          <circle cx="811" cy="560" r="13" fill="#eba9cf" /><circle cx="748" cy="1443" r="13" fill="#c283a5" />
          <path d="M684 1028l10-12 20 2 14-6 4 14-12 6-4 14-14 6-16-8z" fill="#0008d8" />
          <text x="190" y="436" transform="rotate(13 190 436)" font-size="60" font-weight="700" fill="#cb7ba4" stroke="#7c4662" stroke-width="2">Right</text>
        </svg>

        <svg class="triad" width="50" height="60" viewBox="0 0 50 60" aria-label="Orientation">
          <path d="M34 38V19" stroke="#1e6b22" stroke-width="4" /><path d="M29 21l5-12 5 12z" fill="#2f8a33" />
          <path d="M34 38L20 34" stroke="#1515a0" stroke-width="4" /><path d="M11 31l9-3 0 10z" fill="#121278" />
          <path d="M34 38l-12 5" stroke="#8c1a1a" stroke-width="4" /><path d="M17 44l6-6 4 8z" fill="#c81919" />
          <text x="31" y="6" fill="#1e7a22">Y</text><text x="1" y="33" fill="#1a1ab8">Z</text><text x="10" y="50" fill="#c81919">X</text>
        </svg>
      </section>
    </main>

    <div class="bottabs">
      <span class="filler"></span>
      <span class="nav"><button v-for="c in ['first', 'prev', 'next', 'last']" :key="c" :aria-label="c"><svg width="12" height="12" viewBox="0 0 12 12" aria-hidden="true"><path :d="c === 'first' || c === 'prev' ? 'M9 1v10L3 6z' : 'M3 1v10l6-5z'" /><path v-if="c === 'first'" d="M1 1h1v10H1z" /><path v-if="c === 'last'" d="M10 1h1v10h-1z" /></svg></button></span>
      <button class="bt m cur">Model</button><button class="bt v">3D Views</button><button class="bt s">Motion Study 1</button>
    </div>
    <footer class="status">
      <span class="prod">SOLIDWORKS Premium 2020 SP0.0</span><span class="edit">Editing Part</span><Ico n="warn" s="16" /><span class="cust">Custom</span><i class="up"></i><Ico n="tag" s="16" />
    </footer>
    <footer class="task">
      <button v-for="a in apps" :key="a.n" :class="{ run: a.run, act: a.act }" :aria-label="a.n">
        <Ico :n="a.n" :s="a.n === 'win' || a.n === 'search' ? 18 : 24" />
        <b v-if="a.l" class="let">{{ a.l }}</b><b v-if="a.n === 'foxit'" class="pdf">PDF</b><span v-if="a.n === 'sw'" class="swl"><b>SW</b><b>2020</b></span>
      </button>
      <div class="tray">
        <Ico n="caret" s="16" /><Ico n="plane" s="18" /><Ico n="vol" s="18" />
        <span class="clock">2:29 PM<br />9/26/2022</span>
        <span class="note"><Ico n="notif" s="18" /><em>1</em></span>
      </div>
    </footer>
  </div>
</template>

<style>
html, body { margin: 0; background: #4a4a4a; }
</style>

<style scoped>
* { box-sizing: border-box; }
.app { min-height: 100vh; display: flex; flex-direction: column; font: 11px/14px "Open Sans", "Noto Sans", sans-serif; color: #f0f0f0; background: #4a4a4a; }
button { font: inherit; color: inherit; background: none; border: 0; padding: 0; margin: 0; display: flex; align-items: center; justify-content: center; white-space: nowrap; }
input { font: inherit; min-width: 0; }
svg { display: block; flex: none; }
i { flex: none; }
.dn, .up { width: 0; height: 0; border: 3px solid transparent; border-top: 4px solid #8c8c8c; border-bottom: 0; }
.up { border-top: 0; border-bottom: 4px solid #8c8c8c; }
.rt { width: 0; height: 0; border: 4px solid transparent; border-left: 5px solid #222; border-right: 0; }

.titlebar { height: 31px; padding-top: 1px; display: flex; align-items: center; border-bottom: 1px solid #8a8a8a; }
.logo { width: 144px; height: 34px; margin: -1px 0 0 10px; align-self: flex-start; position: relative; z-index: 2; display: flex; align-items: center; gap: 2px; padding-left: 6px; background: linear-gradient(#fff 40%, #d4d4d4); border: 1px solid #fff; color: #c9281c; flex: none; }
.brand { font-size: 15px; font-style: italic; font-family: "Liberation Sans", sans-serif; line-height: 34px; }
.menus { display: flex; gap: 17px; margin-left: 29px; width: 301px; }
.pin { margin-left: 7px; }
.quick { display: flex; align-items: center; gap: 8px; border-left: 2px solid #333; height: 30px; margin-left: 6px; padding-left: 17px; }
.quick button { gap: 8px; }
.quick .on .dn { border-top-color: #fff; }
.doc { margin-left: auto; margin-right: 324px; }
.search { width: 202px; height: 23px; display: flex; align-items: center; gap: 5px; padding: 0 4px 0 5px; background: #f0f0f4; border: 1px solid #111; }
.search input { flex: 1; border: 0; background: none; padding: 0; }
.search input::placeholder { color: #555; opacity: 1; }
.search .dn { border-top-color: #222; }
.wbtns { display: flex; align-items: center; gap: 9px; margin: 0 4px 0 8px; }
.wbtns .dn { border-top-color: #fff; }

.ribbon { height: 87px; display: flex; padding-top: 6px; color: #8f8f8f; border-bottom: 1px solid #8a8a8a; line-height: 13px; }
.group { display: flex; height: 78px; border-right: 1px solid #8a8a8a; flex: none; }
.big { flex-direction: column; justify-content: flex-start; padding-top: 12px; position: relative; }
.big.drop { padding-top: 4px; }
.big .dn { position: absolute; bottom: 9px; }
.g1 { width: 268px; padding-left: 6px; } .g1 .big { width: 60px; } .g1 .col { margin-left: 2px; }
.g2 { width: 269px; padding-left: 4px; } .g2 .big { width: 51px; } .g2 .col { margin-left: 4px; }
.g3 { width: 231px; } .g3 .big { width: 38px; } .g3 .big + .big { width: 44px; } .g3 .col { width: 64px; margin-left: 3px; } .g3 .col + .col { margin-left: 0; width: 80px; }
.g4 { width: 108px; padding-left: 2px; } .g4 .big { width: 60px; } .g4 .big + .big { width: 44px; }
.col { margin-top: -1px; }
.col button { height: 26px; gap: 6px; justify-content: flex-start; }
.instant { width: 60px; height: 78px; margin-left: 1px; flex-direction: column; justify-content: flex-start; padding-top: 11px; background: #2b2b2b; border: 1px solid #000; color: #fff; }

.tabrow { height: 22px; display: flex; justify-content: space-between; background: #fff; }
.tabs { display: flex; background: #303030; border-bottom: 1px solid #8a8a8a; }
.tabs button { border-right: 1px solid #8a8a8a; color: #fff; }
.tabs .cur { background: #4a4a4a; font-weight: 700; }
.docbtns { display: flex; gap: 8px; align-items: center; padding: 8px 11px 0 0; height: 22px; }

.work { flex: 1; display: flex; }
.strip { width: 47px; }
.strip .dots { height: 13px; margin: 0 2px; background: repeating-linear-gradient(90deg, #bbb 0 2px, transparent 2px 4px) 0 2px / 100% 2px no-repeat; }
.strip button { width: 47px; height: 26px; justify-content: flex-start; padding-left: 6px; gap: 8px; }
.strip hr { height: 8px; margin: 0 2px 0 5px; border: 0; background: linear-gradient(#262626 0 1px, #888 1px 2px) 0 3px / 100% 2px no-repeat; }
.strip .inst { width: 27px; margin-left: 3px; padding-left: 3px; background: #2b2b2b; border: 1px solid #000; }
.strip .end { border-top: 1px solid #888; margin: 6px 2px 0 0; }

.panel { width: 243px; border-right: 2px solid #8a8a8a; position: relative; display: flex; flex-direction: column; }
.grab { height: 20px; margin-right: 2px; border-bottom: 1px solid #888; display: flex; justify-content: center; align-items: center; padding-top: 4px; background: linear-gradient(#a8bcbc 0 1px, transparent 1px 3px, #888 3px 4px, transparent 4px) 0 1px no-repeat; }
.knob { width: 8px; height: 8px; border-radius: 50%; background: #ddd; border: 2px solid #999; }
.ptabs { height: 27px; margin: 4px 1px 0 2px; display: flex; border-bottom: 1px solid #8a8a8a; border-top: 1px solid #8a8a8a; position: relative; background: #303030; }
.ptabs > button { width: 40px; height: 24px; border-right: 1px solid #8a8a8a; }
.ptabs .cur { background: #4a4a4a; height: 26px; padding-bottom: 2px; }
.scroll { display: flex; position: absolute; right: 0; bottom: 0; }
.scroll button { width: 19px; height: 20px; background: #eee; color: #111; border: 1px solid #bbb; }
.phead { height: 35px; display: flex; align-items: center; gap: 4px; padding: 0 9px 2px 8px; }
.phead .right { margin-left: auto; }
.acts { height: 24px; margin-bottom: 4px; display: flex; align-items: center; gap: 7px; padding-left: 8px; }
.sec { margin: 0 4px 0 4px; border-top: 1px solid #a5a5a5; padding-bottom: 12px; }
.sec h2 { font: inherit; font-weight: 700; margin: 0; height: 19px; padding: 0 9px 2px 4px; display: flex; align-items: center; justify-content: space-between; }
.chev { width: 7px; height: 7px; border: 1px solid #888; border-right: 0; border-bottom: 0; transform: rotate(45deg); margin-top: 4px; }
.msg { padding-bottom: 6px; }
.msg p { margin: 0; height: 24px; line-height: 25px; padding-left: 4px; background: #80ff80; color: #123; }
.selrow { display: flex; align-items: center; height: 24px; margin: 6px 4px 0 8px; }
.swatch { width: 12px; height: 24px; margin-left: 6px; }
.pink { background: #ff80c0; } .violet { background: #8000ff; } .green { background: #00cc33; }
.selrow input { flex: 1; height: 24px; border: 1px solid #aaa; padding: 0 1px 3px; background: #fff; color: #111; outline: 0; }
.selrow.active input { background: #cce4f7; border: 2px solid #5fb0e6; }
.rows { display: flex; flex-direction: column; gap: 6px; padding: 7px 4px 0 5px; margin-bottom: -1px; }
.rel { height: 22px; display: flex; align-items: center; justify-content: flex-start; }
.box { width: 22px; height: 22px; border: 1px solid #ddd; background: linear-gradient(135deg, #333, #6a6a6a); margin-right: 6px; flex: none; }
.rel .num { margin-left: -1px; flex: 1; height: 22px; border: 1px solid #999; padding: 0 2px 2px; color: #222; background: #fff; }
.rel .num:disabled { background: #ababab; color: #333; }
.rel .foc { border-color: #4a90d9; }
.box.down { background: #444; border-color: #222; }
.inset { padding-left: 34px; }
.inset .num { margin-left: -2px; }
.spin { display: flex; flex-direction: column; gap: 1px; margin-left: 2px; }
.spin button { width: 17px; height: 10px; border-radius: 3px; background: #c9d6f8; border: 1px solid #fff; }
.spin button::after { content: ""; width: 5px; height: 5px; border: 1px solid #33436b; border-right: 0; border-bottom: 0; transform: rotate(45deg); margin-top: 3px; }
.spin button + button::after { transform: rotate(225deg); margin: 0 0 3px; }
.spin.off button { background: #eee; } .spin.off button::after { border-color: #bbb; }
.chk { height: 20px; display: flex; align-items: center; padding-left: 27px; position: relative; }
.sec > .chk { padding-left: 32px; margin-top: 3px; }
.chk label { display: flex; align-items: center; gap: 5px; }
.chk input { appearance: none; width: 12px; height: 12px; margin: 0; background: #f2f2f2; border: 1px solid #1c4f78; }
.tip { position: absolute; left: 125px; top: -1px; height: 21px; width: 82px; text-align: center; line-height: 19px; color: #222; background: linear-gradient(#fff, #e2e2ee); border: 1px solid #777; box-shadow: 2px 2px 3px #222; }
.foot { margin: auto 2px 0 0; height: 3px; border-top: 1px solid #999; border-bottom: 1px solid #777; }
.handle { position: absolute; left: 242px; top: 402px; width: 9px; height: 39px; background: #4a4a4a; border: 1px solid #999; border-left: 0; z-index: 3; display: flex; align-items: center; }

.view { flex: 1; position: relative; background: #fff; color: #111; border-right: 2px solid #555; }
.tree { list-style: none; margin: 0; padding: 5px 0 0 3px; position: relative; z-index: 2; width: 220px; }
.tree li { height: 22px; display: flex; align-items: center; padding-left: 40px; position: relative; }
.tree .root { padding-left: 0; gap: 5px; }
.root .dn { margin-right: 8px; border-top-color: #222; }
.tree .rt { position: absolute; left: 25px; }
.tree li span { display: flex; align-items: center; gap: 5px; height: 20px; padding: 0 1px; border: 1px solid transparent; }
.tree li .sel { background: #cde6fa; border-color: #3c5fae; }
.hud { position: absolute; top: 5px; left: 637px; display: flex; gap: 6px; }
.hud button { width: 20px; height: 20px; gap: 6px; justify-content: flex-start; }
.hud .wide { width: 34px; }
.corner { position: absolute; }
.yes { right: 72px; top: 32px; } .nope { right: 31px; top: 64px; }
.pane { position: absolute; right: -2px; top: 54px; width: 25px; border: 1px solid #999; border-right: 0; background: #303030; }
.pane button { width: 24px; height: 24px; border-bottom: 1px solid #888; }
.pane .cur { background: #b5b5b5; }
.model { position: absolute; left: 610px; top: 90px; }
.model text { font-family: "Liberation Sans", sans-serif; }
.triad { position: absolute; left: 8px; bottom: 37px; font-size: 11px; overflow: visible; }

.bottabs { height: 16px; display: flex; border-top: 1px solid #8a8a8a; border-bottom: 1px solid #8a8a8a; padding-left: 47px; }
.filler { width: 27px; background: #b5b5b5; }
.nav { display: flex; background: #999; padding: 0 1px; }
.nav button { width: 16px; border: 1px solid #aaa; }
.nav path { fill: #7c7c7c; }
.bt { border-right: 1px solid #8a8a8a; background: #303030; color: #fff; line-height: 12px; padding-bottom: 2px; }
.m { width: 56px; } .v { width: 68px; } .s { width: 108px; padding-right: 12px; }
.bt.cur { background: #4a4a4a; font-weight: 700; }
.status { height: 18px; display: flex; align-items: center; padding: 0 4px 0 1px; }
.edit { margin-left: auto; margin-right: 28px; }
.cust { margin-left: 72px; color: #9a9a9a; }
.status .up { margin: 0 28px 0 15px; }
.task { height: 40px; background: #101010; display: flex; }
.task > button { width: 49px; position: relative; }
.task .run::after { content: ""; position: absolute; left: 4px; right: 4px; bottom: 0; height: 2px; background: #76b9ed; }
.task .act { background: #3a3a3a; }
.let { position: absolute; left: 15px; color: #fff; }
.pdf { position: absolute; bottom: 6px; font-size: 6px; line-height: 8px; color: #fff; }
.swl { position: absolute; display: flex; flex-direction: column; align-items: center; gap: 3px; padding-top: 2px; font-size: 8px; line-height: 11px; color: #fff; }
.tray { margin-left: auto; display: flex; align-items: center; gap: 8px; padding-right: 4px; }
.clock { width: 62px; text-align: center; line-height: 17px; margin-top: -2px; }
.note { position: relative; padding-right: 19px; border-right: 1px solid #777; height: 40px; display: flex; align-items: center; margin-left: 4px; }
.note em { position: absolute; left: 9px; top: 19px; width: 16px; height: 16px; border-radius: 50%; background: #333; border: 1px solid #888; font-style: normal; text-align: center; line-height: 14px; }
</style>
